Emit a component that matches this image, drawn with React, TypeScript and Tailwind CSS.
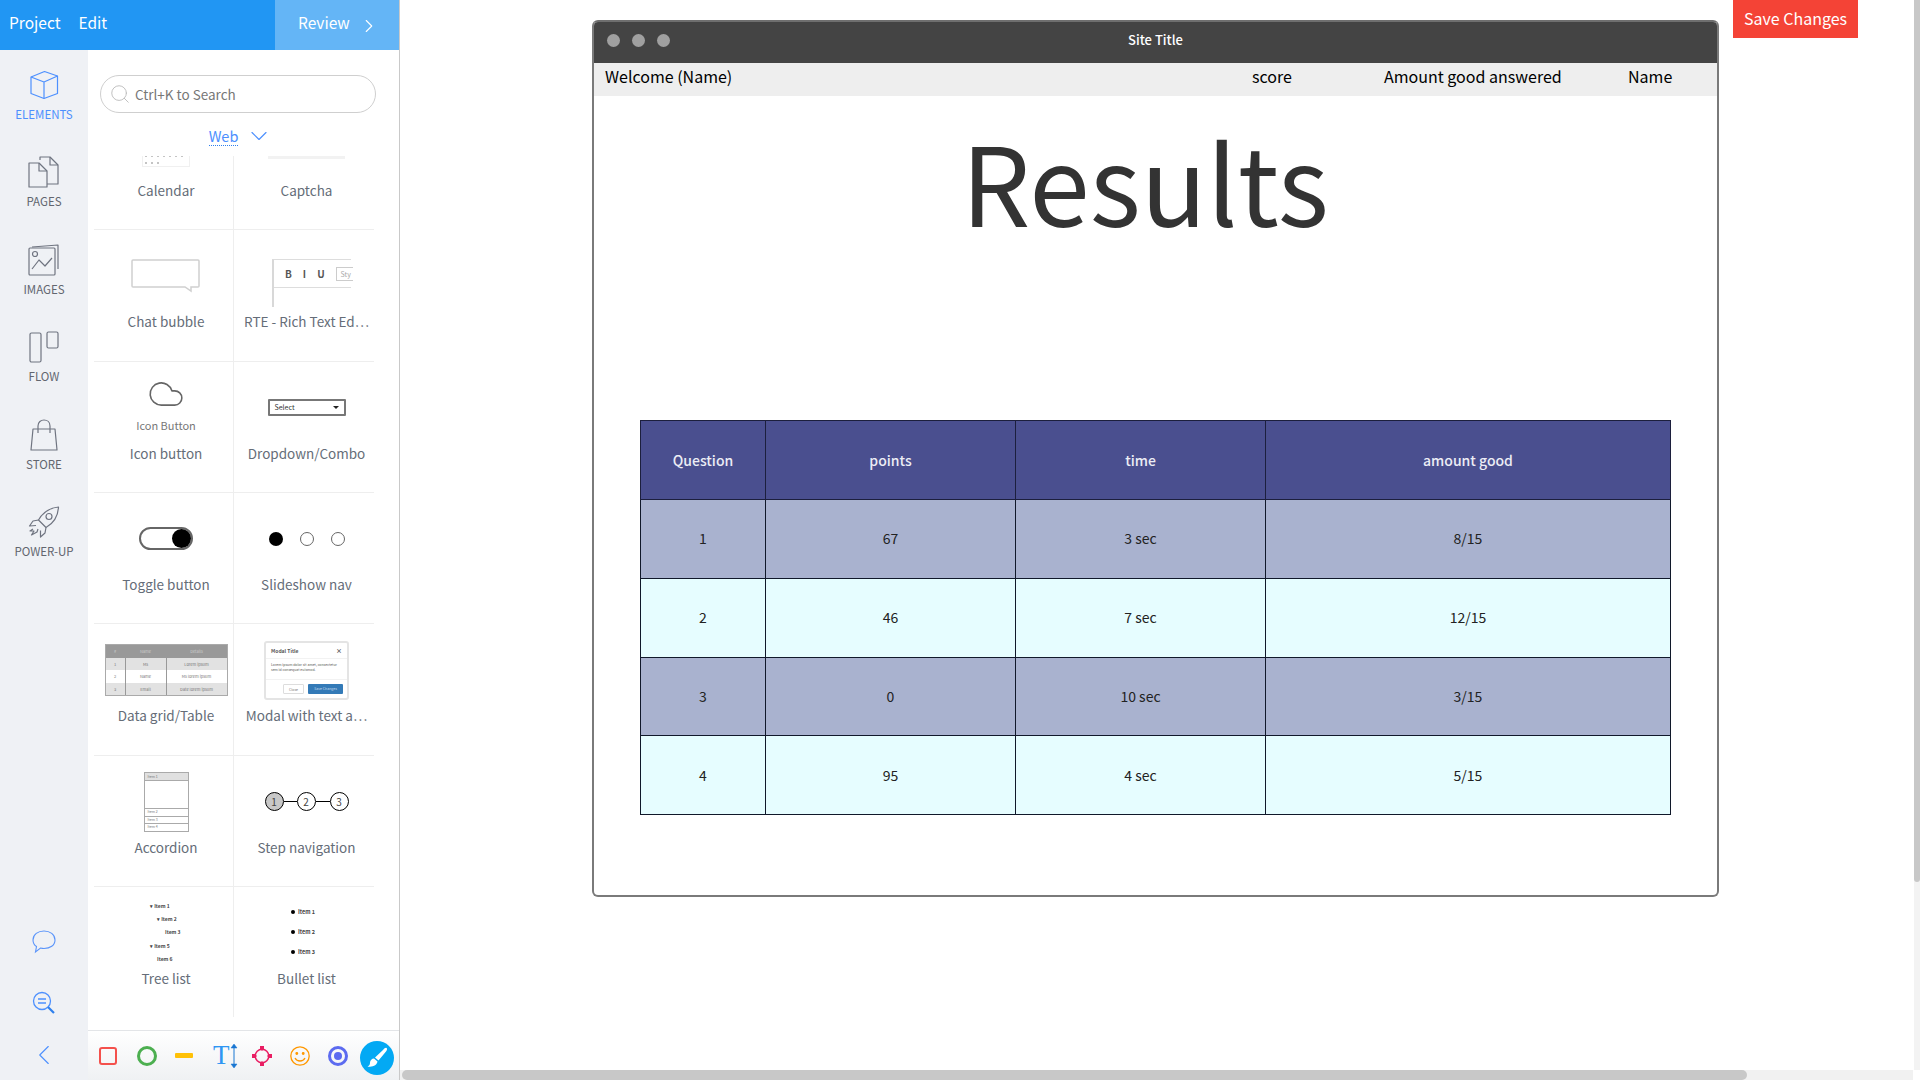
import { ReactNode } from 'react';
import { ChevronLeft, ChevronRight, ChevronDown, Cloud, Search } from 'lucide-react';

const font = { fontFamily: '"Noto Sans CJK SC", "Noto Sans", sans-serif' };

const RailIcon = ({ name }: { name: string }) => {
  const c = name === 'ELEMENTS' ? '#4d90fe' : '#6f7480';
  const common = { fill: 'none', stroke: c, strokeWidth: 1.2, strokeLinejoin: 'round' as const };
  if (name === 'ELEMENTS')
    return (
      <svg width="30" height="30" viewBox="0 0 30 30" {...common}>
        <path d="M15.500 1.500 L28.500 6 V23.500 L15 28.500 L2 23.500 V7 Z" />
        <path d="M2 7 L15 12 L28.500 6 M15 12 V28.500" />
      </svg>
    );
  if (name === 'PAGES')
    return (
      <svg width="32" height="32" viewBox="0 0 32 32" {...common}>
        <path d="M12 4 V1 H22 L30 9 V28 H19" />
        <path d="M22 1 V9 H30" />
        <path d="M1 7 H11 L19 15 V31 H1 Z" />
        <path d="M11 7 V15 H19" />
      </svg>
    );
  if (name === 'IMAGES')
    return (
      <svg width="32" height="32" viewBox="0 0 32 32" {...common}>
        <path d="M4 3 L30 1 V25" />
        <rect x="1" y="4" width="26" height="27" rx="1" />
        <circle cx="7" cy="10" r="2.500" />
        <path d="M4 25 L11 16 L17 22 L24 14" />
      </svg>
    );
  if (name === 'FLOW')
    return (
      <svg width="32" height="32" viewBox="0 0 32 32" {...common}>
        <rect x="2" y="2" width="11" height="29" rx="1.500" />
        <rect x="19" y="1" width="11" height="16" rx="1.500" />
      </svg>
    );
  if (name === 'STORE')
    return (
      <svg width="30" height="32" viewBox="0 0 30 32" {...common}>
        <path d="M4 10 H26 L28 31 H2 Z" />
        <path d="M9 14 V7 C9 -1 21 -1 21 7 V14" />
      </svg>
    );
  return (
    <svg width="32" height="32" viewBox="0 0 32 32" {...common}>
      <path d="M30.500 1 C21 2 15 6 10.500 14 L18 21.500 C26 17 30 11 30.500 1 Z" />
      <circle cx="21" cy="10.500" r="3" />
      <path d="M10.500 14 L5 15 L1.500 20 L8 19.500 M18 21.500 L17 27 L12.500 31 L12.500 24.500" />
      <path d="M5 23 L2 25 L6 25 L3.500 29 L9 26 L10 23" />
    </svg>
  );
};

const RailItem = ({ name }: { name: string }) => (
  <div className="h-[87.5px] flex flex-col items-center">
    <div className="h-[38px] flex items-center justify-center">
      <RailIcon name={name} />
    </div>
    <div className={`mt-[2px] text-[11.500px] leading-[16px] ${name === 'ELEMENTS' ? 'text-[#4d90fe]' : 'text-[#62666f]'}`}>
      {name}
    </div>
  </div>
);

const DotRow = ({ n }: { n: number }) => (
  <div className="flex gap-[4px]">
    {Array.from({ length: n }).map((_, i) => (
      <div key={i} className="w-[2px] h-[2px] bg-[#c4c4c4]" />
    ))}
  </div>
);

const Calendar = () => (
  <div className="w-[48px] h-[44px] border border-[#f0f0f0] flex flex-col justify-end gap-[5px] pb-[2px] pl-[2px]">
    <DotRow n={7} />
    <DotRow n={3} />
  </div>
);

const ChatBubble = () => (
  <svg width="70" height="34" viewBox="0 0 70 34" fill="none" stroke="#d0d0d0" strokeWidth="1.500">
    <path d="M2 1 H67 Q68 1 68 2 V27 Q68 28 67 28 H60 V32 L54 28 H2 Q1 28 1 27 V2 Q1 1 2 1 Z" />
  </svg>
);

const RichText = () => (
  <div className="w-[79px] h-[48px] mt-[14px] ml-[10px] border-l-2 border-l-[#d8d8d8] border-t border-t-[#ddd]">
    <div className="h-[28px] border-b border-[#ddd] flex items-center text-[10px] font-bold text-[#555] pl-[11px] gap-[11px]">
      <span>B</span>
      <span>I</span>
      <span>U</span>
      <span className="border border-r-0 border-[#ccc] text-[7px] font-normal text-[#aaa] pl-[4px] pr-[2px] leading-[12px]">Sty</span>
    </div>
  </div>
);

const IconButton = () => (
  <div className="flex flex-col items-center mt-[-8px]">
    <Cloud size={38} strokeWidth={1} color="#666" />
    <div className="text-[11px] leading-[14px] text-[#777] mt-[5px]">Icon Button</div>
  </div>
);

const Dropdown = () => (
  <div className="w-[78px] h-[17px] border-2 border-[#777] rounded-[1px] flex items-center justify-between px-[5px] mt-[-1px]">
    <span className="text-[7px] text-[#333]">Select</span>
    <span className="w-0 h-0 border-l-[3px] border-r-[3px] border-t-[3px] border-l-transparent border-r-transparent border-t-[#222]" />
  </div>
);

const Toggle = () => (
  <div className="w-[54px] h-[23px] rounded-full border-2 border-[#666] flex items-center justify-end pr-[0.500px]">
    <div className="w-[19px] h-[19px] rounded-full bg-black" />
  </div>
);

const Slideshow = () => (
  <div className="flex gap-[17px] items-center">
    <div className="w-[14px] h-[14px] rounded-full bg-black" />
    <div className="w-[14px] h-[14px] rounded-full border border-[#666]" />
    <div className="w-[14px] h-[14px] rounded-full border border-[#666]" />
  </div>
);

const DataGrid = () => (
  <div className="w-[123px] h-[52px] border border-[#aaa] grid grid-cols-[20px_41px_1fr] grid-rows-4 text-[4px] text-center leading-[13px] text-[#777]">
    {[
      ['#', 'Name', 'Details'],
      ['1', 'Ms', 'Lorem ipsum'],
      ['2', 'Name', 'Ms lorem ipsum'],
      ['3', 'Email', 'Date lorem ipsum'],
    ].map((row, i) =>
      row.map((t, j) => (
        <div
          key={`${i}-${j}`}
          className={`${j < 2 ? 'border-r border-[#999]' : ''} ${
            i === 0 ? 'bg-[#999] text-[#ccc]' : i === 2 ? 'bg-white' : 'bg-[#e2e2e2]'
          }`}
        >
          {t}
        </div>
      )),
    )}
  </div>
);

const Modal = () => (
  <div className="w-[85px] h-[59px] rounded-[3px] border-2 border-[#e4e4e4] bg-white flex flex-col">
    <div className="h-[16px] flex items-center justify-between px-[5px] text-[5px] font-bold text-[#555] border-b border-[#f2f2f2]">
      <span>Modal Title</span>
      <span className="text-[6px]">×</span>
    </div>
    <div className="flex-1 px-[5px] pt-[3px] text-[3.500px] leading-[5px] text-[#555] border-b border-[#f2f2f2]">
      Lorem ipsum dolor sit amet, consectetur sem id consequat euismod.
    </div>
    <div className="h-[18px] flex items-center justify-end gap-[4px] pr-[4px] text-[3.500px]">
      <span className="w-[21px] h-[10px] leading-[9px] text-center border border-[#ddd] rounded-[1px] text-[#777]">Close</span>
      <span className="w-[35px] h-[10px] leading-[10px] text-center bg-[#337ab7] rounded-[1px] text-[#cde]">Save Changes</span>
    </div>
  </div>
);

const Accordion = () => (
  <div className="w-[45px] h-[60px] border border-[#aaa] text-[3.500px] text-[#777] flex flex-col">
    <div className="h-[8px] leading-[7px] bg-[#e0e0e0] pl-[3px] border-b border-[#aaa]">Item 1</div>
    <div className="flex-1" />
    {['Item 2', 'Item 3', 'Item 4'].map((t) => (
      <div key={t} className="h-[7.500px] leading-[6px] pl-[3px] border-t border-[#aaa]">{t}</div>
    ))}
  </div>
);

const StepDot = ({ n, active }: { n: number; active?: boolean }) => (
  <div className={`w-[19px] h-[19px] rounded-full border-[1.500px] border-black flex items-center justify-center text-[10px] text-[#444] ${active ? 'bg-[#c8c8c8]' : 'bg-white'}`}>
    {n}
  </div>
);

const Steps = () => (
  <div className="flex items-center">
    <StepDot n={1} active />
    <div className="w-[13px] h-px bg-black" />
    <StepDot n={2} />
    <div className="w-[14px] h-px bg-black" />
    <StepDot n={3} />
  </div>
);

const TreeList = () => (
  <div className="w-[40px] ml-[8px] text-[5px] leading-[13.200px] font-bold text-[#444] whitespace-nowrap mt-[-2px]">
    <div>▾ Item 1</div>
    <div className="pl-[7px]">▾ Item 2</div>
    <div className="pl-[15px]">Item 3</div>
    <div>▾ Item 5</div>
    <div className="pl-[7px]">Item 6</div>
  </div>
);

const BulletItem = ({ label }: { label: string }) => (
  <div className="flex items-center gap-[3px]">
    <div className="w-[4px] h-[4px] rounded-full bg-black" />
    <span>{label}</span>
  </div>
);

const BulletList = () => (
  <div className="text-[5.500px] leading-[20px] font-bold text-[#444] whitespace-nowrap mt-[-2px] ml-[-7px]">
    <BulletItem label="Item 1" />
    <BulletItem label="Item 2" />
    <BulletItem label="Item 3" />
  </div>
);

const elements: { label: string; preview: ReactNode }[] = [
  { label: 'Calendar', preview: <Calendar /> },
  { label: 'Captcha', preview: <div className="w-[77px] h-[28px] bg-[#f2f2f2]" /> },
  { label: 'Chat bubble', preview: <ChatBubble /> },
  { label: 'RTE - Rich Text Ed…', preview: <RichText /> },
  { label: 'Icon button', preview: <IconButton /> },
  { label: 'Dropdown/Combo', preview: <Dropdown /> },
  { label: 'Toggle button', preview: <Toggle /> },
  { label: 'Slideshow nav', preview: <Slideshow /> },
  { label: 'Data grid/Table', preview: <DataGrid /> },
  { label: 'Modal with text a…', preview: <Modal /> },
  { label: 'Accordion', preview: <Accordion /> },
  { label: 'Step navigation', preview: <Steps /> },
  { label: 'Tree list', preview: <TreeList /> },
  { label: 'Bullet list', preview: <BulletList /> },
];

const Tools = () => (
  <div className="h-[50px] border-t border-[#e3e5e8] bg-gradient-to-b from-white to-[#eff1f3] flex items-center relative">
    <div className="w-[18px] h-[18px] ml-[11px] rounded-[3px] border-2 border-[#f4514c]" />
    <div className="w-[20px] h-[20px] ml-[20px] rounded-full border-[3px] border-[#4caf50]" />
    <div className="w-[18px] h-[5px] ml-[18px] rounded-[1px] bg-[#ffc107]" />
    <div className="w-[30px] ml-[20px] flex items-center text-[#2f96f3]">
      <span className="text-[27px] leading-[27px]" style={{ fontFamily: '"Liberation Serif", serif' }}>T</span>
      <svg width="8" height="24" viewBox="0 0 8 24" fill="#1976d2" stroke="#1976d2">
        <path d="M4 2 V22" />
        <path d="M4 0 L7 4 H1 Z M4 24 L7 20 H1 Z" strokeWidth="0.500" />
      </svg>
    </div>
    <svg className="ml-[9px]" width="20" height="20" viewBox="0 0 20 20" fill="#e91e63">
      <circle cx="10" cy="10" r="6.800" fill="none" stroke="#e91e63" strokeWidth="1.500" />
      <path d="M8 0 H12 V3 L10 5 L8 3 Z M8 20 H12 V17 L10 15 L8 17 Z M0 8 V12 H3 L5 10 L3 8 Z M20 8 V12 H17 L15 10 L17 8 Z" />
    </svg>
    <svg className="ml-[18px]" width="20" height="20" viewBox="0 0 20 20" fill="none" stroke="#ff9800" strokeWidth="1.300">
      <circle cx="10" cy="10" r="9.200" />
      <circle cx="6.800" cy="7.500" r="0.800" fill="#ff9800" />
      <circle cx="13.200" cy="7.500" r="0.800" fill="#ff9800" />
      <path d="M5 12 C7 16 13 16 15 12" />
    </svg>
    <div className="ml-[18px] w-[20px] h-[20px] rounded-full border-[3px] border-[#5c6bf0] flex items-center justify-center">
      <div className="w-[8px] h-[8px] rounded-full bg-[#5c6bf0]" />
    </div>
    <div className="ml-[12px] w-[34px] h-[34px] mt-[4px] rounded-full bg-[#03a9f4] flex items-center justify-center">
      <svg width="22" height="22" viewBox="0 0 22 22" fill="white">
        <path d="M20.500 1 C21.500 1.500 21 3 20 4.500 L12.500 13.500 L9 10.500 L17 3 C18.500 1.500 19.500 0.500 20.500 1 Z" />
        <path d="M8 11.500 L11.500 14.500 C11 18 7 20.500 1.500 19.500 C3.500 18.500 4 17.500 4 15.500 C4 13.500 6 11.500 8 11.500 Z" />
      </svg>
    </div>
  </div>
);

const Sidebar = () => (
  <div className="w-[400px] shrink-0 h-[1080px] flex flex-col border-r border-[#c9c9c9]">
    <div className="h-[50px] bg-[#2196f3] flex text-white text-[15.500px]">
      <div className="flex-1 flex items-center pl-[9px] pb-[4px] gap-[18px]">
        <span>Project</span>
        <span>Edit</span>
      </div>
      <div className="w-[124px] bg-[#64b5f6] flex items-center pl-[23px] pb-[4px]">
        <span>Review</span>
        <ChevronRight size={22} strokeWidth={1.200} className="ml-[8px] mt-[5px]" />
      </div>
    </div>
    <div className="flex-1 flex min-h-0">
      <div className="w-[88px] shrink-0 bg-[#eff1f5] flex flex-col pt-[15.500px]">
        {['ELEMENTS', 'PAGES', 'IMAGES', 'FLOW', 'STORE', 'POWER-UP'].map((n) => (
          <RailItem key={n} name={n} />
        ))}
        <div className="mt-auto flex flex-col items-center pb-[8px]">
          <svg width="24" height="24" viewBox="0 0 24 24" fill="none" stroke="#5a94fa" strokeWidth="1.100">
            <path d="M12 1 C18 1 23 4.500 23 10 C23 15.500 18 18.500 12 18.500 C10.500 18.500 9.500 18.300 8.500 18 L3.500 22 L4.500 16.500 C2 15 1 12.500 1 10 C1 4.500 6 1 12 1 Z" />
          </svg>
          <svg className="mt-[37px]" width="24" height="24" viewBox="0 0 24 24" fill="none" stroke="#4d90fe" strokeWidth="1.300">
            <circle cx="10" cy="10" r="8.500" />
            <path d="M6 8 H14 M6 12 H14" />
            <path d="M16 16 L22 22" strokeWidth="2.200" stroke="#2f80ed" />
          </svg>
          <ChevronLeft className="mt-[23px]" size={34} strokeWidth={0.800} color="#4d90fe" />
        </div>
      </div>
      <div className="flex-1 min-w-0 flex flex-col bg-white">
        <div className="flex-1 min-h-0 flex flex-col">
          <div className="h-[38px] mt-[25px] ml-[12px] mr-[23px] rounded-full border border-[#cfcfcf] flex items-center pl-[8px] text-[13.500px] text-[#777]">
            <Search size={22} strokeWidth={1} color="#bbb" />
            <span className="ml-[4px]">Ctrl+K to Search</span>
          </div>
          <div className="h-[43px] flex items-center justify-center text-[14.500px] text-[#4d90fe] pr-[5px]">
            <span className="border-b border-dotted border-[#2f80ed] leading-[18px] mt-[4px]">Web</span>
            <ChevronDown size={28} strokeWidth={1} className="ml-[7px] mt-[3px]" />
          </div>
          <div className="ml-[6px] w-[280px] h-[861px] overflow-hidden">
            <div className="grid grid-cols-2 mt-[-57px]">
              {elements.map((e, i) => (
                <div
                  key={e.label}
                  className={`h-[131.330px] pl-[5px] flex flex-col items-center ${i % 2 === 0 ? 'border-r border-[#eeeeee]' : ''} ${i < 12 ? 'border-b border-[#eeeeee]' : ''}`}
                >
                  <div className="h-[78px] mt-[7px] w-full flex flex-col items-center justify-center">{e.preview}</div>
                  <div className="mt-[-4px] text-[13.500px] leading-[20px] text-[#656d78] whitespace-nowrap">{e.label}</div>
                </div>
              ))}
            </div>
          </div>
        </div>
        <Tools />
      </div>
    </div>
  </div>
);

const rows = [
  ['1', '67', '3 sec', '8/15'],
  ['2', '46', '7 sec', '12/15'],
  ['3', '0', '10 sec', '3/15'],
  ['4', '95', '4 sec', '5/15'],
];

const ResultsWindow = () => (
  <div className="w-[1127px] h-[877px] mt-[20px] ml-[192px] rounded-[6px] border-2 border-[#7a7a7a] border-t-[#6f6f6f] bg-white overflow-hidden flex flex-col">
    <div className="h-[41px] bg-[#444444] flex items-center pb-[5px] shrink-0">
      <div className="flex gap-[12px] pl-[13px]">
        <div className="w-[13px] h-[13px] rounded-full bg-[#a0a0a0]" />
        <div className="w-[13px] h-[13px] rounded-full bg-[#a0a0a0]" />
        <div className="w-[13px] h-[13px] rounded-full bg-[#a0a0a0]" />
      </div>
      <div className="flex-1 text-center text-white text-[13px] font-medium pr-[76px]">Site Title</div>
    </div>
    <div className="h-[33px] bg-[#eeeeee] flex items-center pb-[8px] text-[16px] text-black shrink-0">
      <span className="ml-[11px] w-[647px]">Welcome (Name)</span>
      <span className="w-[132px]">score</span>
      <span className="w-[244px]">Amount good answered</span>
      <span>Name</span>
    </div>
    <div className="text-center text-[109px] leading-[150px] text-[#333333] font-normal mt-[9px] pr-[21px]">Results</div>
    <table className="mt-[165px] ml-[46px] w-[1031px] h-[395px] border border-black border-collapse table-fixed text-center text-[14px] text-[#222]">
      <colgroup>
        <col className="w-[125px]" />
        <col className="w-[250px]" />
        <col className="w-[250px]" />
        <col />
      </colgroup>
      <thead>
        <tr className="bg-[#4a4f8f] text-[#ecedf5] font-medium h-[79px]">
          {['Question', 'points', 'time', 'amount good'].map((h) => (
            <th key={h} className="border border-[#1c1f3d] font-medium">{h}</th>
          ))}
        </tr>
      </thead>
      <tbody>
        {rows.map((r, i) => (
          <tr key={r[0]} className={i % 2 === 0 ? 'bg-[#a9b2cf]' : 'bg-[#e6fdff]'}>
            {r.map((c, j) => (
              <td key={j} className="border border-[#10182a]">{c}</td>
            ))}
          </tr>
        ))}
      </tbody>
    </table>
  </div>
);

export default function App() {
  return (
    <div className="w-[1920px] h-[1080px] overflow-hidden flex bg-white" style={font}>
      <Sidebar />
      <div className="flex-1 min-w-0 flex flex-col relative">
        <div className="flex-1 min-h-0 flex">
          <div className="flex-1 min-w-0">
            <ResultsWindow />
          </div>
          <div className="w-[6px] bg-[#f3f3f3]">
            <div className="h-[882px] bg-[#c8c8c8] rounded-b-[3px]" />
          </div>
        </div>
        <div className="h-[10px] mr-[7px] bg-[#f1f1f1] shrink-0">
          <div className="ml-[2px] w-[1345px] h-full bg-[#c8c8c8] rounded-full" />
        </div>
        <div className="absolute top-0 left-[1333px] w-[125px] h-[38px] pb-[3px] bg-[#f44336] text-white text-[16px] flex items-center justify-center">
          Save Changes
        </div>
      </div>
    </div>
  );
}
